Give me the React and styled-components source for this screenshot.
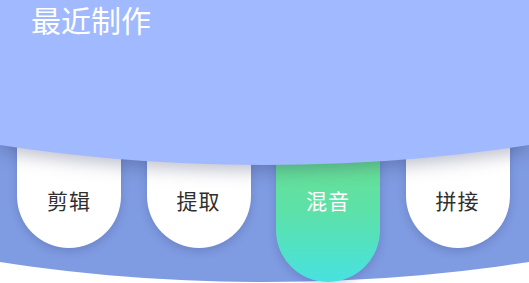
import React from "react";
import styled, { createGlobalStyle } from "styled-components";

const GlobalStyle = createGlobalStyle`
  html, body {
    margin: 0;
    padding: 0;
    background: #ffffff;
    overflow: hidden;
  }
  body {
    font-family: "Noto Sans CJK SC", "Noto Sans", sans-serif;
  }
`;

const Page = styled.div`
  width: 529px;
  height: 283px;
  position: relative;
  overflow: hidden;
  background: #ffffff;
`;

const Header = styled.header`
  position: relative;
  z-index: 2;
  height: 165px;
  padding: 4px 0 0 31px;
  box-sizing: border-box;
`;

// curved backdrop, its drop-shadow falls onto the tabs below
const HeaderBackdrop = styled.div`
  position: absolute;
  inset: 0;
  filter: drop-shadow(0 5px 9px rgba(40, 48, 90, 0.32));

  &::before {
    content: "";
    position: absolute;
    inset: 0;
    background: #a1b9fe;
    clip-path: ellipse(800px 356px at 50% -191px);
  }
`;

const Title = styled.h1`
  position: relative;
  margin: 0;
  font-size: 30px;
  line-height: 30px;
  font-weight: 400;
  color: #ffffff;
  white-space: nowrap;
`;

const Band = styled.section`
  position: relative;
  margin-top: -35px;
  height: 154px;

  &::before {
    content: "";
    position: absolute;
    inset: 0;
    background: #7f9be1;
    clip-path: ellipse(800px 356px at 50% -204px);
  }
`;

const Tabs = styled.nav`
  position: relative;
  display: flex;
  align-items: flex-start;
  gap: 25.5px;
  padding: 0 0 0 17px;
`;

const Tab = styled.div`
  width: 104px;
  height: ${(p) => (p.$active ? 152 : 118)}px;
  box-sizing: border-box;
  padding-top: 59px;
  border-radius: 0 0 52px 52px;
  background: ${(p) =>
    p.$active
      ? "linear-gradient(180deg, #6fe087 0%, #5ce1aa 55%, #47e2e0 100%)"
      : "#ffffff"};
  box-shadow: 0 3px 9px rgba(40, 50, 110, 0.22);
  color: ${(p) => (p.$active ? "#ffffff" : "#2f2f2f")};
  font-size: 21px;
  line-height: 22px;
  text-align: center;
  letter-spacing: 1px;
`;

const items = ["剪辑", "提取", "混音", "拼接"];

export default function App() {
  return (
    <Page>
      <GlobalStyle />
      <Header>
        <HeaderBackdrop />
        <Title>最近制作</Title>
      </Header>
      <Band>
        <Tabs>
          {items.map((label) => (
            <Tab key={label} $active={label === "混音"}>
              {label}
            </Tab>
          ))}
        </Tabs>
      </Band>
    </Page>
  );
}
